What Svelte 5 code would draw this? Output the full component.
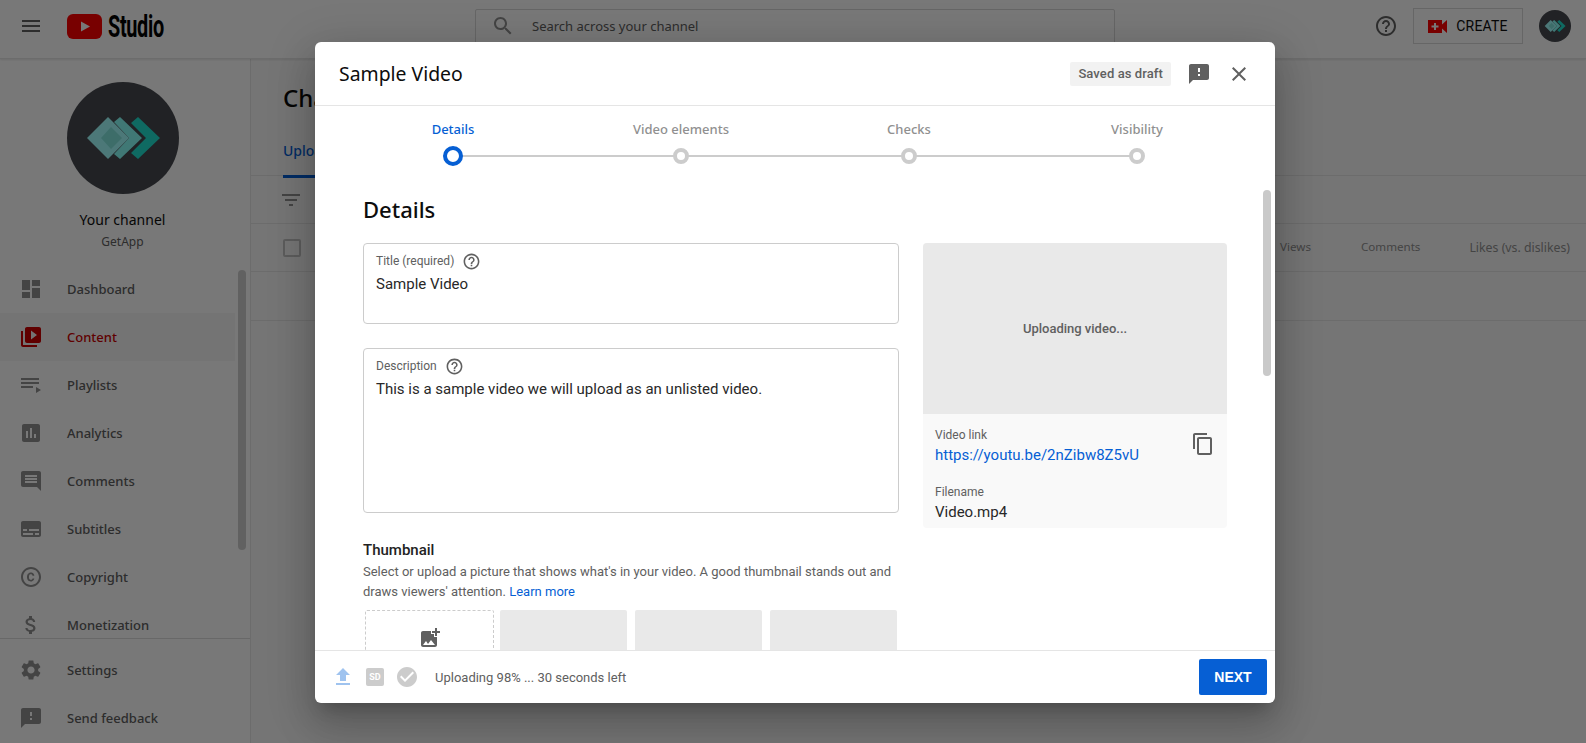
<script>
    const ICONS = {
        menu: 'M3 18h18v-2H3v2zm0-5h18v-2H3v2zm0-7v2h18V6H3z',
        search: 'M15.5 14h-.79l-.28-.27C15.41 12.59 16 11.11 16 9.5 16 5.91 13.09 3 9.5 3S3 5.91 3 9.5 5.91 16 9.5 16c1.61 0 3.09-.59 4.23-1.57l.27.28v.79l5 4.99L20.49 19l-4.99-5zm-6 0C7.01 14 5 11.99 5 9.5S7.01 5 9.5 5 14 7.01 14 9.5 11.99 14 9.5 14z',
        help: 'M11 18h2v-2h-2v2zm1-16C6.48 2 2 6.48 2 12s4.48 10 10 10 10-4.48 10-10S17.52 2 12 2zm0 18c-4.41 0-8-3.59-8-8s3.59-8 8-8 8 3.59 8 8-3.59 8-8 8zm0-14c-2.21 0-4 1.79-4 4h2c0-1.1.9-2 2-2s2 .9 2 2c0 2-3 1.75-3 5h2c0-2.25 3-2.5 3-5 0-2.21-1.79-4-4-4z',
        dashboard: 'M3 13h8V3H3v10zm0 8h8v-6H3v6zm10 0h8V11h-8v10zm0-18v6h8V3h-8z',
        content: 'M4 6H2v14c0 1.1.9 2 2 2h14v-2H4V6zm16-4H8c-1.1 0-2 .9-2 2v12c0 1.1.9 2 2 2h12c1.1 0 2-.9 2-2V4c0-1.1-.9-2-2-2zm-8 12.5v-9l6 4.5-6 4.5z',
        playlists: 'M2 5h18v2H2zm0 4h18v2H2zm0 4h12v2H2zm15 1v6l5-3z',
        analytics: 'M19 3H5c-1.1 0-2 .9-2 2v14c0 1.1.9 2 2 2h14c1.1 0 2-.9 2-2V5c0-1.1-.9-2-2-2zM9 17H7v-7h2v7zm4 0h-2V7h2v10zm4 0h-2v-4h2v4z',
        comments: 'M21.99 4c0-1.1-.89-2-1.99-2H4c-1.1 0-2 .9-2 2v12c0 1.1.9 2 2 2h14l4 4-.01-18zM18 14H6v-2h12v2zm0-3H6V9h12v2zm0-3H6V6h12v2z',
        subtitles: 'M20 4H4c-1.1 0-2 .9-2 2v12c0 1.1.9 2 2 2h16c1.1 0 2-.9 2-2V6c0-1.1-.9-2-2-2zM4 12h4v2H4v-2zm10 6H4v-2h10v2zm6 0h-4v-2h4v2zm0-4H10v-2h10v2z',
        copyright: 'M10.08 10.86c.05-.33.16-.62.3-.87s.34-.46.59-.62c.24-.15.54-.22.91-.23.23.01.44.05.63.13.2.09.38.21.52.36s.25.33.34.53.13.42.14.64h1.79c-.02-.47-.11-.9-.28-1.29s-.4-.73-.7-1.01-.66-.5-1.08-.66-.88-.23-1.39-.23c-.65 0-1.22.11-1.7.34s-.88.53-1.2.92-.56.84-.71 1.36S8 11.29 8 11.87v.27c0 .58.08 1.12.23 1.64s.39.97.71 1.35.72.69 1.2.91 1.05.34 1.7.34c.47 0 .91-.08 1.32-.23s.77-.36 1.08-.63.56-.58.74-.94.29-.74.3-1.15h-1.79c-.01.21-.06.4-.15.58s-.21.33-.36.46-.32.23-.52.3c-.19.07-.39.09-.6.1-.36-.01-.66-.08-.89-.23-.25-.16-.45-.37-.59-.62s-.25-.55-.3-.88-.08-.67-.08-1v-.27c0-.35.03-.68.08-1.01zM12 2C6.48 2 2 6.48 2 12s4.48 10 10 10 10-4.48 10-10S17.52 2 12 2zm0 18c-4.41 0-8-3.59-8-8s3.59-8 8-8 8 3.59 8 8-3.59 8-8 8z',
        money: 'M11.8 10.9c-2.27-.59-3-1.2-3-2.15 0-1.09 1.01-1.85 2.7-1.85 1.78 0 2.44.85 2.5 2.1h2.21c-.07-1.72-1.12-3.3-3.21-3.81V3h-3v2.16c-1.94.42-3.5 1.68-3.5 3.61 0 2.31 1.91 3.46 4.7 4.13 2.5.6 3 1.48 3 2.41 0 .69-.49 1.79-2.7 1.79-2.06 0-2.87-.92-2.98-2.1h-2.2c.12 2.19 1.76 3.42 3.68 3.83V21h3v-2.15c1.95-.37 3.5-1.5 3.5-3.55 0-2.84-2.43-3.81-4.7-4.4z',
        settings: 'M19.14 12.94c.04-.3.06-.61.06-.94 0-.32-.02-.64-.07-.94l2.03-1.58c.18-.14.23-.41.12-.61l-1.92-3.32c-.12-.22-.37-.29-.59-.22l-2.39.96c-.5-.38-1.03-.7-1.62-.94l-.36-2.54c-.04-.24-.24-.41-.48-.41h-3.84c-.24 0-.43.17-.47.41l-.36 2.54c-.59.24-1.13.57-1.62.94l-2.39-.96c-.22-.08-.47 0-.59.22L2.74 8.87c-.12.21-.08.47.12.61l2.03 1.58c-.05.3-.09.63-.09.94s.02.64.07.94l-2.03 1.58c-.18.14-.23.41-.12.61l1.92 3.32c.12.22.37.29.59.22l2.39-.96c.5.38 1.03.7 1.62.94l.36 2.54c.05.24.24.41.48.41h3.84c.24 0 .44-.17.47-.41l.36-2.54c.59-.24 1.13-.56 1.62-.94l2.39.96c.22.08.47 0 .59-.22l1.92-3.32c.12-.22.07-.47-.12-.61l-2.01-1.58zM12 15.6c-1.98 0-3.6-1.62-3.6-3.6s1.62-3.6 3.6-3.6 3.6 1.62 3.6 3.6-1.62 3.6-3.6 3.6z',
        feedback: 'M20 2H4c-1.1 0-1.99.9-1.99 2L2 22l4-4h14c1.1 0 2-.9 2-2V4c0-1.1-.9-2-2-2zm-7 12h-2v-2h2v2zm0-4h-2V6h2v4z',
        close: 'M19 6.41L17.59 5 12 10.59 6.41 5 5 6.41 10.59 12 5 17.59 6.41 19 12 13.41 17.59 19 19 17.59 13.41 12z',
        copy: 'M16 1H4c-1.1 0-2 .9-2 2v14h2V3h12V1zm3 4H8c-1.1 0-2 .9-2 2v14c0 1.1.9 2 2 2h11c1.1 0 2-.9 2-2V7c0-1.1-.9-2-2-2zm0 16H8V7h11v14z',
        filter: 'M10 18h4v-2h-4v2zM3 6v2h18V6H3zm3 7h12v-2H6v2z',
        addPhoto: 'M19 7v2.99s-1.99.01-2 0V7h-3s.01-1.99 0-2h3V2h2v3h3v2h-3zm-3 4V8h-3V5H5c-1.1 0-2 .9-2 2v12c0 1.1.9 2 2 2h12c1.1 0 2-.9 2-2v-8h-3zM5 19l3-4 2 3 3-4 4 5H5z',
        upload: 'M5 20h14v-2H5v2zm0-10h4v6h6v-6h4l-7-7-7 7z',
        check: 'M12 2C6.48 2 2 6.48 2 12s4.48 10 10 10 10-4.48 10-10S17.52 2 12 2zm-2 15l-5-5 1.41-1.41L10 14.17l7.59-7.59L19 8l-9 9z'
    };

    const NAV = [
        { label: 'Dashboard', icon: 'dashboard' },
        { label: 'Content', icon: 'content', active: true },
        { label: 'Playlists', icon: 'playlists' },
        { label: 'Analytics', icon: 'analytics' },
        { label: 'Comments', icon: 'comments' },
        { label: 'Subtitles', icon: 'subtitles' },
        { label: 'Copyright', icon: 'copyright' },
        { label: 'Monetization', icon: 'money' }
    ];

    const NAV_BOTTOM = [
        { label: 'Settings', icon: 'settings' },
        { label: 'Send feedback', icon: 'feedback' }
    ];

    const STEPS = ['Details', 'Video elements', 'Checks', 'Visibility'];
</script>

{#snippet icon(name, size = 24)}
    <svg class="icon" width={size} height={size} viewBox="0 0 24 24"><path d={ICONS[name]} /></svg>
{/snippet}

{#snippet channelLogo(size)}
    <svg class="logo-mark" width={size} height={size} viewBox="0 0 112 112">
        <circle cx="56" cy="56" r="56" fill="#46494f" />
        <polygon points="71,35 93,56 71,77 64,71 79,56 64,41" fill="#20e1d0" />
        <polygon points="53,35 75,56 53,77 47,72 62,56 47,40" fill="#88fff8" />
        <polygon points="41,35 62,56 41,77 20,56" fill="#a2ffff" />
        <polygon points="44,45 55,56 44,67 34,56" fill="#82e8e0" />
    </svg>
{/snippet}

{#snippet navRow(item)}
    <div class="nav-row" class:active={item.active}>
        {@render icon(item.icon)}
        <span>{item.label}</span>
    </div>
{/snippet}

<div class="page">
    <header class="topbar">
        <div class="brand">
            <button class="plain menu">{@render icon('menu')}</button>
            <svg class="yt" width="35" height="25" viewBox="0 0 35 25">
                <rect width="35" height="25" rx="6" fill="#ff0000" />
                <polygon points="14,7.500 23,12.500 14,17.500" fill="#fff" />
            </svg>
            <span class="studio">Studio</span>
        </div>
        <div class="search">
            {@render icon('search')}
            <span>Search across your channel</span>
        </div>
        <div class="top-actions">
            {@render icon('help')}
            <div class="create">
                <svg width="19" height="13" viewBox="0 0 19 13">
                    <path d="M0 0h14v4.500L19 0v13l-5-4.500V13H0z" fill="#ff0000" />
                    <path d="M6 3h2v2.500h2.500v2H8V10H6V7.500H3.500v-2H6z" fill="#fff" />
                </svg>
                <span>CREATE</span>
            </div>
            {@render channelLogo(32)}
        </div>
    </header>

    <div class="layout">
        <aside class="sidebar">
            <div class="profile">
                {@render channelLogo(112)}
                <div class="your">Your channel</div>
                <div class="chan">GetApp</div>
            </div>
            <nav class="nav">
                {#each NAV as item}
                    {@render navRow(item)}
                {/each}
                <div class="side-scroll"></div>
            </nav>
            <div class="nav-bottom">
                {#each NAV_BOTTOM as item}
                    {@render navRow(item)}
                {/each}
            </div>
        </aside>

        <main class="main">
            <h1>Channel content</h1>
            <div class="tabs"><span class="tab">Uploads</span></div>
            <div class="filter-row">{@render icon('filter')}</div>
            <div class="table-head">
                <span class="box"></span>
                <div class="cols">
                    <span class="views">Views</span>
                    <span class="comments">Comments</span>
                    <span class="likes">Likes (vs. dislikes)</span>
                </div>
            </div>
            <div class="table-row"></div>
        </main>
    </div>

    <div class="backdrop"></div>

    <div class="dialog">
        <div class="dialog-head">
            <h2>Sample Video</h2>
            <span class="draft">Saved as draft</span>
            {@render icon('feedback')}
            {@render icon('close')}
        </div>

        <div class="dialog-body">
            <div class="stepper">
                {#each STEPS as step, i}
                    <div class="step" class:current={i === 0}>
                        <span class="step-label">{step}</span>
                        <span class="dot"></span>
                    </div>
                {/each}
            </div>

            <div class="columns">
                <div class="form">
                    <h3>Details</h3>
                    <div class="field title-field">
                        <div class="field-label">Title (required) {@render icon('help', 19)}</div>
                        <div class="field-value">Sample Video</div>
                    </div>
                    <div class="field desc-field">
                        <div class="field-label">Description {@render icon('help', 19)}</div>
                        <div class="field-value">This is a sample video we will upload as an unlisted video.</div>
                    </div>
                    <h4>Thumbnail</h4>
                    <p class="hint">
                        Select or upload a picture that shows what's in your video. A good thumbnail stands out and
                        draws viewers' attention. <span class="link">Learn more</span>
                    </p>
                    <div class="thumbs">
                        <div class="thumb add">{@render icon('addPhoto')}</div>
                        <div class="thumb"></div>
                        <div class="thumb"></div>
                        <div class="thumb"></div>
                    </div>
                </div>

                <div class="preview">
                    <div class="preview-video">Uploading video...</div>
                    <div class="preview-info">
                        <div class="info-top">
                            <div>
                                <div class="info-label">Video link</div>
                                <div class="info-link">https://youtu.be/2nZibw8Z5vU</div>
                            </div>
                            {@render icon('copy')}
                        </div>
                        <div class="info-label file-label">Filename</div>
                        <div class="info-value">Video.mp4</div>
                    </div>
                </div>
            </div>
            <div class="dialog-scroll"></div>
        </div>

        <div class="dialog-foot">
            <span class="st upload">{@render icon('upload')}</span>
            <span class="sd">SD</span>
            <span class="st done">{@render icon('check')}</span>
            <span class="progress">Uploading 98% ... 30 seconds left</span>
            <button class="next">NEXT</button>
        </div>
    </div>
</div>

<style>
    :global(body) {
        margin: 0;
        overflow: hidden;
    }

    .page {
        position: relative;
        width: 1586px;
        height: 743px;
        overflow: hidden;
        background: #f9f9f9;
        font-family: 'Noto Sans', 'Open Sans', sans-serif;
        color: #0d0d0d;
    }

    .icon {
        display: block;
        flex-shrink: 0;
        fill: #909090;
    }

    .plain {
        border: 0;
        padding: 0;
        background: none;
    }

    .topbar {
        height: 58px;
        box-sizing: content-box;
        display: flex;
        align-items: center;
        background: #fff;
        border-bottom: 1px solid #e5e5e5;
        box-shadow: 0 1px 2px rgba(0, 0, 0, 0.1);
        position: relative;
        z-index: 1;
    }

    .topbar > * {
        margin-bottom: 6px;
    }

    .brand {
        width: 475px;
        display: flex;
        align-items: center;
    }

    .menu {
        margin-left: 19px;
        margin-right: 24px;
    }

    .menu .icon {
        fill: #606060;
    }

    .studio {
        display: inline-block;
        margin-left: 6px;
        font: 700 32px/1 Roboto, sans-serif;
        letter-spacing: -0.5px;
        transform: scaleX(0.62);
        transform-origin: left center;
        color: #030303;
    }

    .search {
        width: 640px;
        height: 35px;
        box-sizing: border-box;
        border: 1px solid #d8d8d8;
        border-radius: 2px;
        display: flex;
        align-items: center;
        padding-left: 15px;
        gap: 17px;
        font-size: 13px;
        color: #606060;
    }

    .top-actions {
        margin-left: auto;
        display: flex;
        align-items: center;
        padding-right: 15px;
    }

    .top-actions > :global(.icon) {
        fill: #606060;
    }

    .create {
        margin: 0 16px 0 15px;
        width: 110px;
        height: 36px;
        box-sizing: border-box;
        border: 1px solid #d8d8d8;
        display: flex;
        align-items: center;
        justify-content: center;
        gap: 9px;
        font: 400 14px Roboto, sans-serif;
        letter-spacing: 0.2px;
        color: #0d0d0d;
    }

    .layout {
        display: flex;
        height: 684px;
    }

    .sidebar {
        width: 251px;
        flex-shrink: 0;
        background: #fff;
        border-right: 1px solid #e5e5e5;
        box-sizing: border-box;
        display: flex;
        flex-direction: column;
    }

    .profile {
        height: 206px;
        flex-shrink: 0;
        display: flex;
        flex-direction: column;
        align-items: center;
        padding: 23px 5px 0 0;
        box-sizing: border-box;
    }

    .your {
        margin-top: 16px;
        font-size: 14px;
        line-height: 20px;
        color: #0d0d0d;
    }

    .chan {
        margin-top: 3px;
        font-size: 12px;
        line-height: 18px;
        color: #606060;
    }

    .nav {
        position: relative;
        flex: 1;
        overflow: hidden;
    }

    .nav-bottom {
        border-top: 1px solid #ddd;
        flex-shrink: 0;
        padding: 7px 0 1px;
    }

    .nav-row {
        height: 48px;
        width: 235px;
        flex-shrink: 0;
        display: flex;
        align-items: center;
        padding-left: 19px;
        box-sizing: border-box;
        gap: 24px;
        font-size: 13px;
        font-weight: 500;
        color: #606060;
    }

    .nav-row.active {
        background: #f7f7f7;
        color: #cc0000;
    }

    .nav-row.active :global(.icon) {
        fill: #cc0000;
    }

    .side-scroll {
        position: absolute;
        left: 238px;
        top: 5px;
        width: 8px;
        height: 280px;
        border-radius: 4px;
        background: #cfcfcf;
    }

    .main {
        flex: 1;
        background: #f9f9f9;
    }

    h1 {
        margin: 0;
        padding: 23px 0 0 32px;
        font-size: 24px;
        line-height: 32px;
        font-weight: 500;
        color: #0d0d0d;
        white-space: nowrap;
    }

    .tabs {
        padding: 25px 0 0 32px;
        height: 62px;
        box-sizing: border-box;
        border-bottom: 1px solid #e5e5e5;
    }

    .tab {
        display: inline-block;
        height: 37px;
        padding-right: 20px;
        font-size: 14px;
        line-height: 20px;
        font-weight: 500;
        color: #065fd4;
        border-bottom: 3px solid #065fd4;
        box-sizing: border-box;
    }

    .filter-row {
        height: 48px;
        display: flex;
        align-items: center;
        padding-left: 28px;
        border-bottom: 1px solid #e5e5e5;
        box-sizing: border-box;
    }

    .table-head {
        height: 48px;
        display: flex;
        align-items: center;
        padding-left: 32px;
        border-bottom: 1px solid #e5e5e5;
        box-sizing: border-box;
    }

    .box {
        width: 18px;
        height: 18px;
        border: 2px solid #c4c4c4;
        box-sizing: border-box;
        border-radius: 2px;
    }

    .cols {
        margin-left: auto;
        display: flex;
        font-size: 11.6px;
        color: #909090;
        padding-right: 16px;
    }

    .comments {
        margin-left: 50px;
    }

    .likes {
        margin-left: 49px;
        font-size: 12.3px;
    }

    .table-row {
        height: 48px;
        border-bottom: 1px solid #e5e5e5;
    }

    .backdrop {
        position: absolute;
        inset: 0;
        z-index: 2;
        background: rgba(0, 0, 0, 0.53);
    }

    .dialog {
        position: absolute;
        left: 315px;
        top: 42px;
        z-index: 3;
        width: 960px;
        height: 661px;
        display: flex;
        flex-direction: column;
        background: #fff;
        border-radius: 6px;
        overflow: hidden;
        box-shadow: 0 11px 15px -7px rgba(0, 0, 0, 0.2), 0 24px 38px 3px rgba(0, 0, 0, 0.14),
            0 9px 46px 8px rgba(0, 0, 0, 0.12);
    }

    .dialog-head {
        height: 64px;
        flex-shrink: 0;
        box-sizing: border-box;
        border-bottom: 1px solid #e5e5e5;
        display: flex;
        align-items: center;
        padding: 0 24px;
    }

    .dialog-head h2 {
        margin: 0 auto 0 0;
        font: 400 19.4px 'Noto Sans', sans-serif;
        color: #0d0d0d;
    }

    .draft {
        height: 24px;
        padding: 0 8px;
        border-radius: 2px;
        background: #f2f2f2;
        font: 500 13px/24px Roboto, sans-serif;
        letter-spacing: 0.1px;
        color: #606060;
        margin-right: 16px;
    }

    .dialog-head :global(.icon) {
        fill: #606060;
    }

    .dialog-head :global(.icon:last-child) {
        margin-left: 16px;
    }

    .dialog-body {
        position: relative;
        flex: 1;
        overflow: hidden;
        padding: 0 48px;
    }

    .stepper {
        display: flex;
        padding: 13px 0 0 0;
        margin: 0 -68px 0 -24px;
        width: 912px;
        box-sizing: border-box;
    }

    .step {
        width: 228px;
        position: relative;
        display: flex;
        flex-direction: column;
        align-items: center;
        flex-shrink: 0;
    }

    .step:not(:last-child)::after {
        content: '';
        position: absolute;
        left: 50%;
        width: 100%;
        top: 36px;
        height: 2px;
        background: #ccc;
    }

    .step-label {
        font-size: 13px;
        line-height: 20px;
        font-weight: 500;
        color: #909090;
    }

    .current .step-label {
        color: #065fd4;
    }

    .dot {
        position: relative;
        z-index: 1;
        margin-top: 9px;
        width: 16px;
        height: 16px;
        box-sizing: border-box;
        border: 4px solid #ccc;
        border-radius: 50%;
        background: #fff;
    }

    .current .dot {
        width: 20px;
        height: 20px;
        margin-top: 7px;
        border-color: #065fd4;
    }

    .columns {
        display: flex;
        gap: 24px;
    }

    .form {
        width: 536px;
        flex-shrink: 0;
    }

    h3 {
        margin: 0;
        padding-top: 28px;
        height: 77px;
        box-sizing: border-box;
        font-size: 22px;
        line-height: 30px;
        font-weight: 500;
        color: #0d0d0d;
    }

    .field {
        box-sizing: border-box;
        border: 1px solid #ccc;
        border-radius: 4px;
        padding: 8px 12px;
        font-family: Roboto, sans-serif;
    }

    .title-field {
        height: 81px;
    }

    .desc-field {
        margin-top: 24px;
        height: 165px;
    }

    .field-label {
        display: flex;
        align-items: center;
        gap: 8px;
        height: 18px;
        font-size: 12px;
        color: #606060;
    }

    .field-label :global(.icon) {
        fill: #606060;
    }

    .field-value {
        margin-top: 3px;
        font-size: 15px;
        line-height: 22px;
        color: #282828;
    }

    h4 {
        margin: 27px 0 0;
        font: 500 15px/20px Roboto, sans-serif;
        color: #222;
    }

    .hint {
        margin: 2px 0 0;
        font: 400 13px/20px Roboto, sans-serif;
        color: #606060;
    }

    .link {
        color: #065fd4;
    }

    .thumbs {
        display: flex;
        gap: 8px;
        margin: 8px 0 0 2px;
    }

    .thumb {
        width: 127px;
        height: 72px;
        flex-shrink: 0;
        border-radius: 2px;
        background: #e9e9e9;
        box-sizing: border-box;
    }

    .thumb.add {
        width: 129px;
        background: #fff;
        border: 1px dashed #ccc;
        display: flex;
        justify-content: center;
        padding-top: 15px;
        margin-right: -2px;
    }

    .thumb.add :global(.icon) {
        fill: #606060;
    }

    .preview {
        width: 304px;
        margin-top: 77px;
        height: 285px;
        flex-shrink: 0;
        border-radius: 4px;
        overflow: hidden;
        background: #f9f9f9;
        font-family: Roboto, sans-serif;
    }

    .preview-video {
        height: 171px;
        display: flex;
        align-items: center;
        justify-content: center;
        background: #e9e9e9;
        font-size: 13px;
        font-weight: 500;
        color: #606060;
    }

    .preview-info {
        padding: 13px 12px;
    }

    .info-top {
        display: flex;
        justify-content: space-between;
    }

    .info-top :global(.icon) {
        fill: #606060;
        margin-top: 5px;
    }

    .info-label {
        font-size: 12px;
        line-height: 16px;
        color: #606060;
    }

    .file-label {
        margin-top: 19px;
    }

    .info-link {
        margin-top: 2px;
        font-size: 15px;
        line-height: 20px;
        color: #065fd4;
    }

    .info-value {
        margin-top: 2px;
        font-size: 15px;
        line-height: 20px;
        color: #282828;
    }

    .dialog-scroll {
        position: absolute;
        right: 4px;
        top: 84px;
        width: 8px;
        height: 186px;
        border-radius: 4px;
        background: #c9c9c9;
    }

    .dialog-foot {
        height: 53px;
        flex-shrink: 0;
        box-sizing: border-box;
        border-top: 1px solid #e5e5e5;
        display: flex;
        align-items: center;
        padding: 0 8px 0 16px;
        font-family: Roboto, sans-serif;
    }

    .upload :global(.icon) {
        fill: #9fc3ef;
    }

    .sd {
        margin-left: 11px;
        width: 18px;
        height: 18px;
        border-radius: 2px;
        background: #ccc;
        color: #fff;
        font: 700 9px/18px Roboto, sans-serif;
        text-align: center;
    }

    .done {
        margin-left: 11px;
    }

    .done :global(.icon) {
        fill: #ccc;
    }

    .progress {
        margin-left: 16px;
        font-size: 13px;
        color: #606060;
    }

    .next {
        margin-left: auto;
        width: 68px;
        height: 36px;
        border: 0;
        border-radius: 2px;
        background: #065fd4;
        color: #fff;
        font: 700 14px 'Liberation Sans', sans-serif;
    }
</style>
